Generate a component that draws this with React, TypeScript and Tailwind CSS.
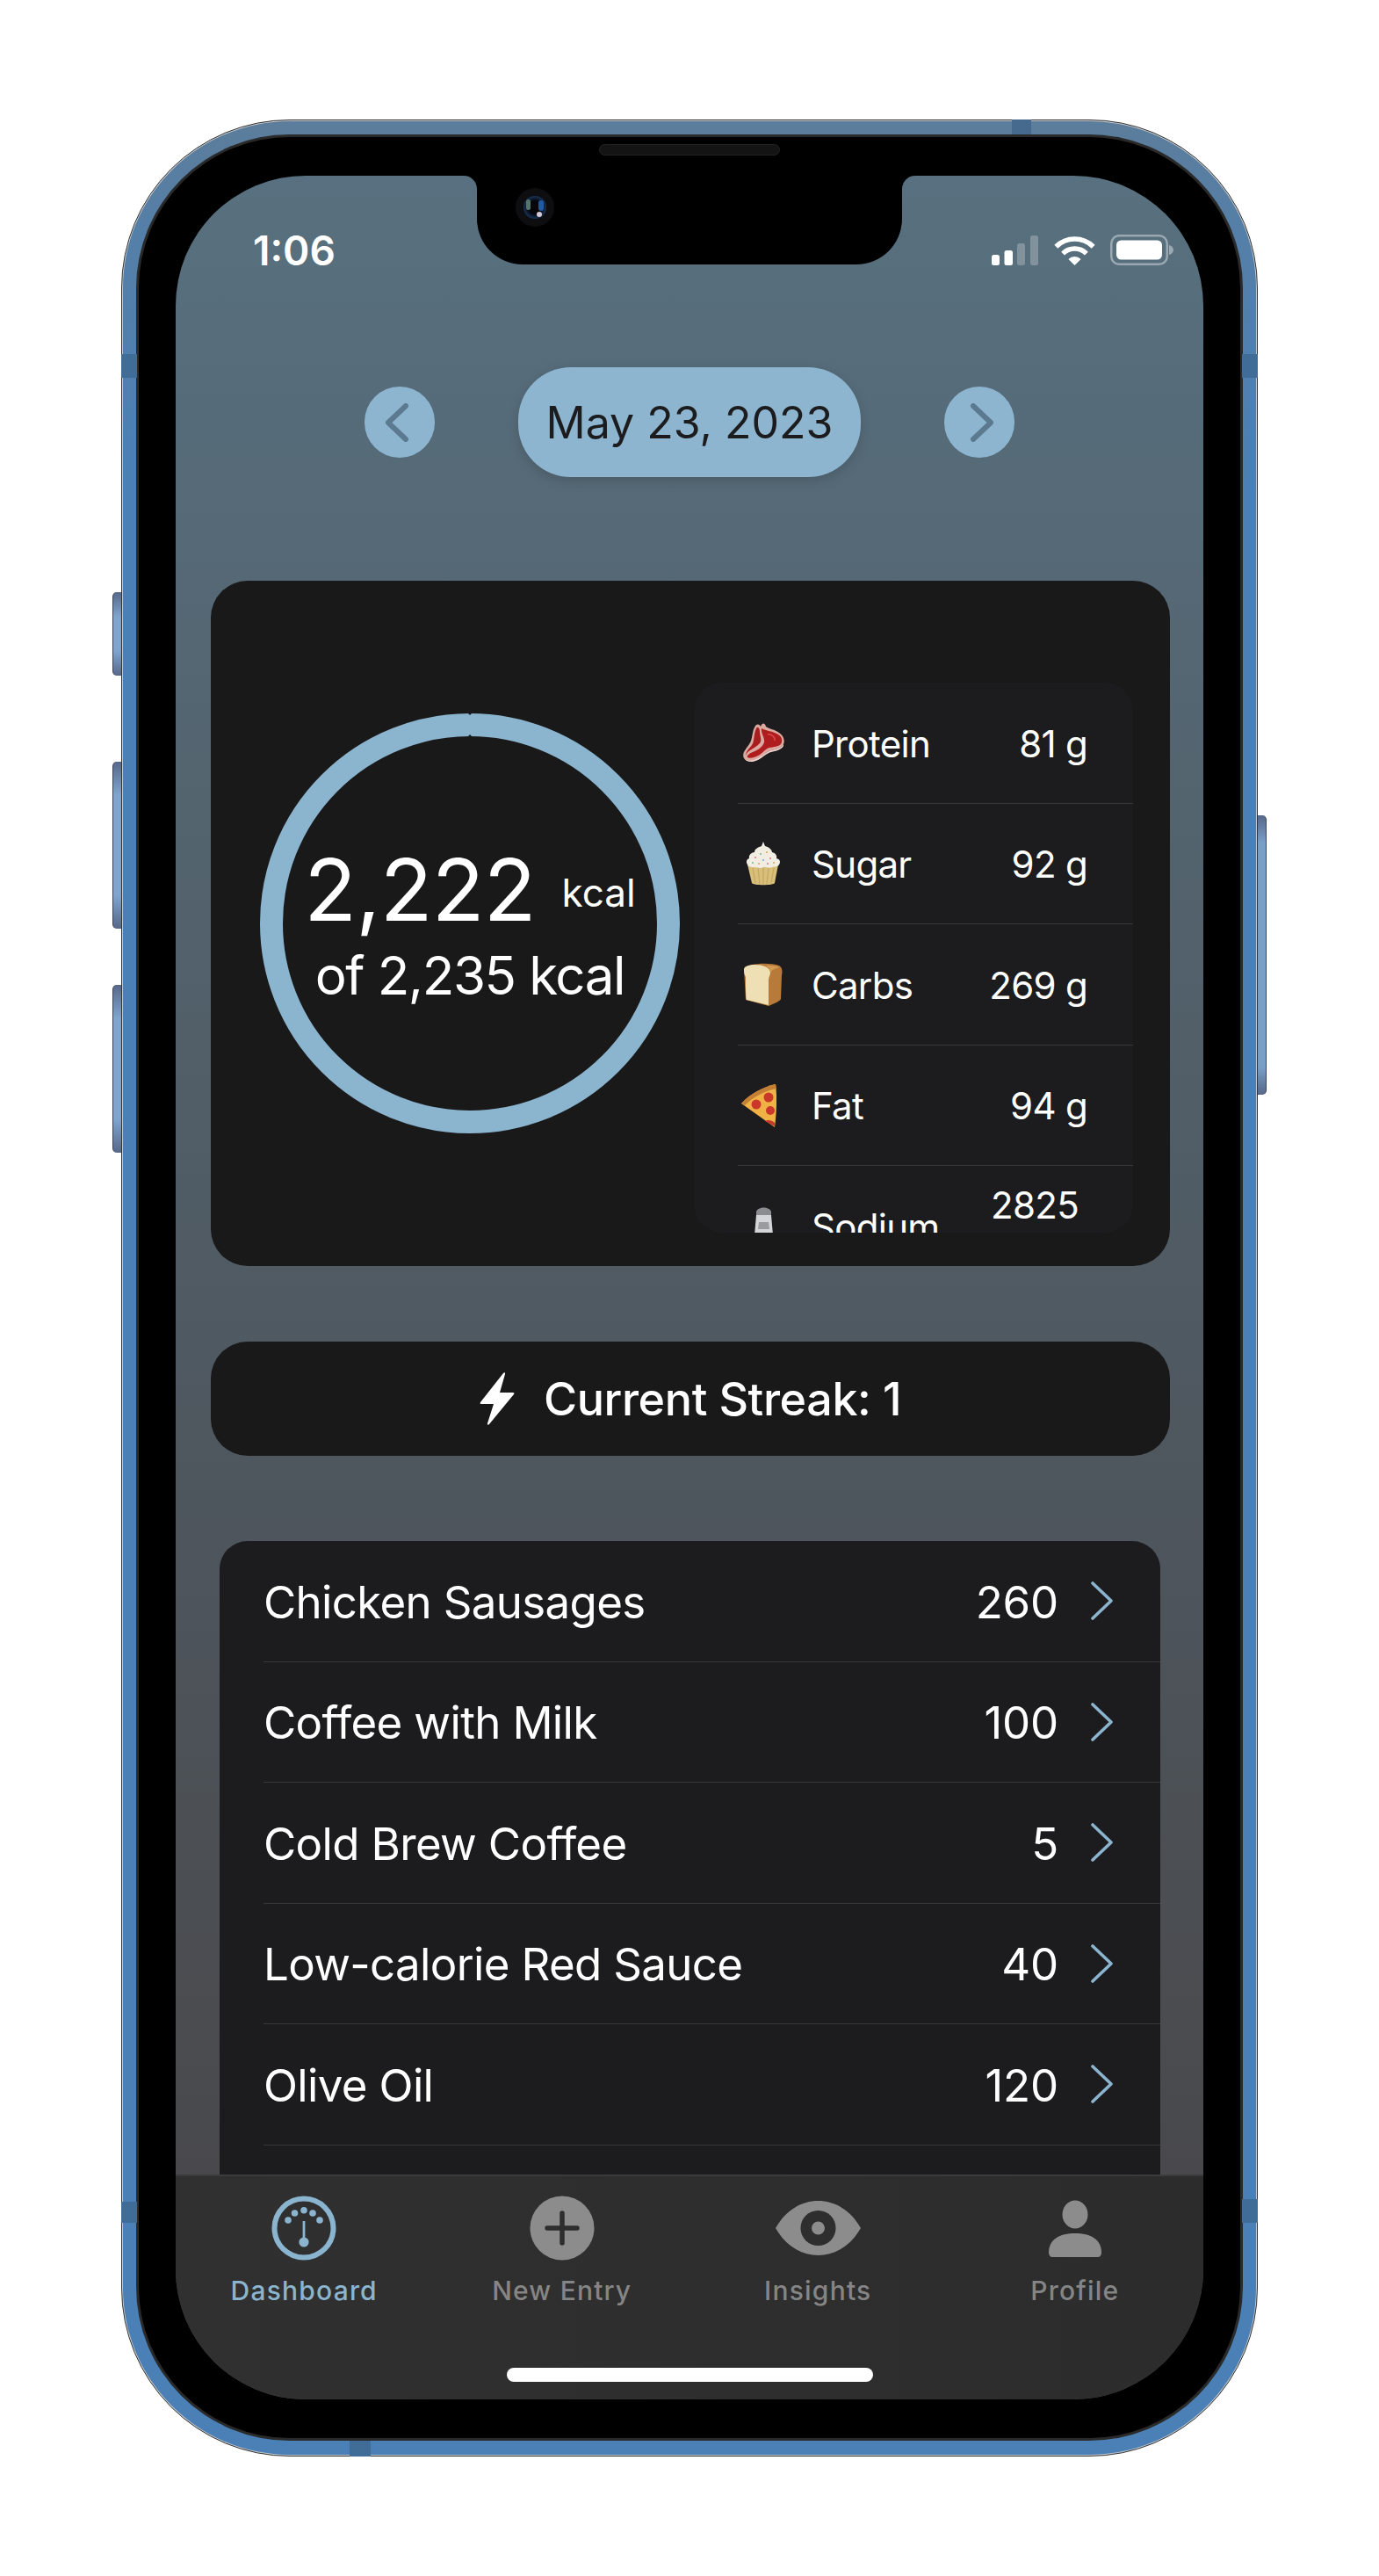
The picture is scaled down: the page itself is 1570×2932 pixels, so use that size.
import React from "react";

const BLUE = "#8bb4ce";

function Steak() {
  return (
    <svg width="48" height="46" viewBox="0 0 48 46">
      <path d="M2 41C-1 35 5 30 8 25C12 20 11 11 14 6C16 1 20 2 21 5C23 0 26 1 27 5C31 8 37 8 42 12C47 15 49 21 47 25C45 29 38 31 33 32C28 33 24 38 18 42C12 45 5 46 2 41Z" fill="#dba99f" />
      <path d="M2 41C5 45 12 44 18 41C24 38 28 33 33 32C38 31 45 29 47 25L47 27C45 31 38 33 33 34C28 35 24 40 18 43C12 46 5 46 2 41Z" fill="#eed2cb" />
      <path d="M4 38C4 33 9 29 11 26C14 22 13 13 16 7C18 4 20 7 20 11C20 16 23 20 20 24C16 28 12 30 9 32C7 33 5 35 4 38Z" fill="#a81e20" />
      <path d="M22 7C27 10 35 10 41 14C46 17 46 22 44 25C41 28 36 28 31 29C27 30 24 34 20 37C15 40 8 42 6 40C5 38 9 35 12 34C17 32 23 29 25 23C26 18 21 12 22 7Z" fill="#b01d1e" />
      <path d="M29 14C33 13 38 17 37 21" stroke="#d8474a" strokeWidth="1.5" fill="none" />
    </svg>
  );
}

function Cupcake() {
  return (
    <svg width="42" height="50" viewBox="0 0 42 50">
      <path d="M3 26L38 26L34 47C33 50 9 50 8 47Z" fill="#d8bf7c" />
      <path d="M3 26C1 23 2 20 5 19C4 15 8 12 11 12C11 8 16 6 19 5L21 0L23 5C27 6 31 9 31 12C35 13 37 16 36 19C40 20 41 23 39 26C38 29 33 28 31 29C27 31 24 28 21 29C18 31 14 29 11 29C8 29 4 29 3 26Z" fill="#f1ede2" />
      <g stroke="#c7a962" strokeWidth="1.4">
        <path d="M9 30L12 47" />
        <path d="M15 30L17 48" />
        <path d="M21 30L21 48" />
        <path d="M27 30L25 48" />
        <path d="M33 30L30 47" />
      </g>
      <g>
        <circle cx="12" cy="18" r="1" fill="#d9748a" />
        <circle cx="18" cy="14" r="1" fill="#79b58a" />
        <circle cx="25" cy="12" r="1" fill="#d9a25f" />
        <circle cx="29" cy="19" r="1" fill="#d9748a" />
        <circle cx="21" cy="21" r="1" fill="#7fa4d0" />
        <circle cx="9" cy="24" r="1" fill="#79b58a" />
        <circle cx="33" cy="24" r="1" fill="#d9a25f" />
        <circle cx="16" cy="25" r="1" fill="#d9a25f" />
        <circle cx="26" cy="25" r="1" fill="#d9748a" />
      </g>
    </svg>
  );
}

function Bread() {
  return (
    <svg className="mr-[2px]" width="45" height="50" viewBox="0 0 45 50">
      <path d="M1 8C5 1 30 0 41 4C45 6 45 12 44 15L43 42C43 44 32 49 29 50L3 43Z" fill="#b87a38" />
      <path d="M1 10C0 5 6 3 13 3C22 3 31 6 31 12C31 15 29 17 29 20L29 49L4 43C3 43 3 20 3 17C2 15 1 13 1 10Z" fill="#efdfb4" />
      <path d="M31 12C31 8 29 5 24 4C30 4 38 4 41 6C39 7 33 8 31 12Z" fill="#d29a52" />
    </svg>
  );
}

function Pizza() {
  return (
    <svg className="mr-[10px]" width="40" height="50" viewBox="0 0 40 50">
      <path d="M0 23C10 12 25 4 39 1C41 15 40 35 38 50Z" fill="#f0b145" />
      <path d="M0 23C10 12 25 4 39 1L40 6C26 9 14 15 4 25Z" fill="#c57f35" />
      <circle cx="31" cy="16" r="5.5" fill="#c9382b" />
      <circle cx="17" cy="24" r="5.5" fill="#c9382b" />
      <circle cx="33" cy="31" r="5" fill="#c9382b" />
      <path d="M27 43C30 41 35 42 38 45L38 49Z" fill="#c9382b" />
    </svg>
  );
}

function Salt() {
  return (
    <svg width="23" height="50" viewBox="0 0 23 50">
      <path d="M3 8C5 2 18 2 20 8L20 12L3 12Z" fill="#8a8c8f" />
      <path d="M3 12L20 12L23 46L0 46Z" fill="#d3d5d8" />
      <path d="M6 20L17 20L18 28L5 28Z" fill="#9a9c9f" />
    </svg>
  );
}

function Chevron({ dir }: { dir: "left" | "right" }) {
  return (
    <svg className={dir === "left" ? "mr-[6px]" : "ml-[5px]"} width="28" height="44" viewBox="0 0 28 44" fill="none" stroke="#5c7a8f" strokeWidth="6" strokeLinecap="round" strokeLinejoin="round">
      <path d={dir === "left" ? "M24 3L4 22L24 41" : "M4 3L24 22L4 41"} />
    </svg>
  );
}

function Signal() {
  return (
    <svg width="54" height="34" viewBox="0 0 54 34" fill="#fff">
      <rect x="0" y="22" width="9" height="12" rx="2.5" />
      <rect x="14.5" y="17" width="9.5" height="17" rx="2.5" />
      <rect x="29" y="9" width="9" height="25" rx="2.5" fillOpacity="0.25" />
      <rect x="44" y="0" width="9" height="34" rx="2.5" fillOpacity="0.25" />
    </svg>
  );
}

function Wifi() {
  return (
    <svg width="47" height="34" viewBox="0 0 47 34" fill="none">
      <path d="M2.3 12.8A30 30 0 0 1 44.7 12.8" stroke="#fff" strokeWidth="5.5" />
      <path d="M10.1 20.6A19 19 0 0 1 36.9 20.6" stroke="#fff" strokeWidth="5.5" />
      <path d="M23.5 34L16.4 26.9A10 10 0 0 1 30.6 26.9Z" fill="#fff" />
    </svg>
  );
}

function Battery() {
  return (
    <svg width="72" height="35" viewBox="0 0 72 35" fill="none">
      <rect x="1.25" y="1.25" width="63.5" height="32.5" rx="9" stroke="#fff" strokeOpacity="0.4" strokeWidth="2.5" />
      <rect x="7" y="6.5" width="52" height="22" rx="5.5" fill="#fff" />
      <path d="M67 12C70 12.5 72 15 72 17.5C72 20 70 22.5 67 23Z" fill="#fff" fillOpacity="0.4" />
    </svg>
  );
}

function DashboardIcon() {
  return (
    <svg width="74" height="74" viewBox="0 0 74 74" fill={BLUE}>
      <circle cx="37" cy="37" r="33.5" fill="none" stroke={BLUE} strokeWidth="6" />
      <circle cx="19" cy="28" r="3.8" />
      <circle cx="26.5" cy="20" r="3.8" />
      <circle cx="37" cy="16.7" r="3.8" />
      <circle cx="47" cy="20" r="3.8" />
      <circle cx="55" cy="28" r="3.8" />
      <rect x="35.6" y="29" width="2.8" height="24" />
      <circle cx="37" cy="53" r="5.6" />
    </svg>
  );
}

function PlusIcon() {
  return (
    <svg width="74" height="74" viewBox="0 0 74 74">
      <circle cx="37" cy="37" r="36.5" fill="#8c8c8c" />
      <path d="M37 20V54M20 37H54" stroke="#2e2e2e" strokeWidth="5.5" strokeLinecap="round" />
    </svg>
  );
}

function EyeIcon() {
  return (
    <svg width="97" height="74" viewBox="0 0 97 74">
      <path d="M0 37C12 16 30 6 48.5 6C67 6 85 16 97 37C85 58 67 68 48.5 68C30 68 12 58 0 37Z" fill="#8c8c8c" />
      <circle cx="48.5" cy="37" r="20" fill="#2e2e2e" />
      <circle cx="48.5" cy="37" r="7.5" fill="#8c8c8c" />
    </svg>
  );
}

function PersonIcon() {
  return (
    <svg width="60" height="74" viewBox="0 0 60 74" fill="#8c8c8c">
      <ellipse cx="30" cy="21.5" rx="14.5" ry="16" />
      <path d="M0 65C0 50 12 43 30 43C48 43 60 50 60 65C60 68 58 70 56 70L4 70C2 70 0 68 0 65Z" />
    </svg>
  );
}

const nutrients = [
  { icon: <Steak />, name: "Protein", value: "81 g" },
  { icon: <Cupcake />, name: "Sugar", value: "92 g" },
  { icon: <Bread />, name: "Carbs", value: "269 g" },
  { icon: <Pizza />, name: "Fat", value: "94 g" },
];

const foods = [
  ["Chicken Sausages", "260"],
  ["Coffee with Milk", "100"],
  ["Cold Brew Coffee", "5"],
  ["Low-calorie Red Sauce", "40"],
  ["Olive Oil", "120"],
];

function Tab({ icon, label, active, inset }: { icon: React.ReactNode; label: string; active?: boolean; inset?: boolean }) {
  return (
    <div className={`flex flex-col items-center ${inset ? "pl-[2px]" : ""}`}>
      <div className="flex h-[74px] items-center justify-center">{icon}</div>
      <div className={`mt-[14px] text-[30px] leading-[40px] font-medium tracking-[1.2px] ${active ? "text-[#8bb4ce]" : "text-[#858585]"}`}>{label}</div>
    </div>
  );
}

export default function App() {
  return (
    <div className="flex h-[2932px] w-full justify-center bg-white pt-[136px] [font-family:Inter,sans-serif]">
      <div className="relative h-[2660px] w-[1294px]">
        {/* side buttons */}
        <div className="absolute left-[-10px] top-[538px] h-[95px] w-[12px] rounded-l-[5px] border-l border-[#3d4250] bg-[linear-gradient(180deg,#56688a,#7fa5cf_30%,#7fa5cf_70%,#56688a)]" />
        <div className="absolute left-[-10px] top-[731px] h-[190px] w-[12px] rounded-l-[5px] border-l border-[#3d4250] bg-[linear-gradient(180deg,#56688a,#7fa5cf_20%,#7fa5cf_80%,#56688a)]" />
        <div className="absolute left-[-10px] top-[985px] h-[191px] w-[12px] rounded-l-[5px] border-l border-[#3d4250] bg-[linear-gradient(180deg,#56688a,#7fa5cf_20%,#7fa5cf_80%,#56688a)]" />
        <div className="absolute right-[-10px] top-[792px] h-[318px] w-[12px] rounded-r-[5px] border-r border-[#3d4250] bg-[linear-gradient(180deg,#56688a,#7a9fc7_10%,#7a9fc7_90%,#56688a)]" />

        {/* device frame */}
        <div className="relative h-full w-full rounded-[192px] border border-[#333333] bg-[#c3c8ce] p-px">
          <div className="h-full w-full rounded-[190px] bg-[linear-gradient(180deg,#5c7d9b_0%,#547fa8_5%,#4a80b6_16%,#4a80b6_100%)] pt-[15px] px-[15px] pb-[16px]">
            <div className="h-full w-full rounded-[175px] bg-[#2a2a2a] p-[3px]">
              <div className="relative h-full w-full rounded-[172px] bg-black px-[42px] pt-[44px] pb-[44px]">
                {/* speaker */}
                <div className="absolute left-[524px] top-[8px] h-[13px] w-[206px] rounded-full border border-[#242424] bg-[#141414]" />
                {/* screen */}
                <div className="relative flex h-full w-full flex-col overflow-hidden rounded-[148px] bg-[linear-gradient(180deg,#58707f_0%,#49494c_90%)]">
                  {/* notch */}
                  <div className="absolute left-[343px] top-0 z-10 h-[101px] w-[484px] rounded-b-[52px] bg-black">
                    <div className="absolute left-[-15px] top-0 h-[15px] w-[15px] bg-black">
                      <div className="h-full w-full rounded-tr-[15px] bg-[#58707f]" />
                    </div>
                    <div className="absolute right-[-15px] top-0 h-[15px] w-[15px] bg-black">
                      <div className="h-full w-full rounded-tl-[15px] bg-[#58707f]" />
                    </div>
                    <div className="absolute left-[44px] top-[14px] flex h-[44px] w-[44px] items-center justify-center rounded-full bg-[#0e0e10]">
                      <div className="relative h-[26px] w-[26px] rounded-full bg-[radial-gradient(circle_at_50%_50%,#05070a_0%,#05070a_40%,#1c3a66_75%,#2f4a42_100%)]">
                        <div className="absolute left-[3px] top-[4px] h-[12px] w-[5px] rounded-full bg-[#56756a]" />
                        <div className="absolute right-[3px] top-[5px] h-[12px] w-[6px] rounded-full bg-[#1f5aa6]" />
                        <div className="absolute bottom-[2px] right-[5px] h-[6px] w-[6px] rounded-full bg-[#d8c8d8]" />
                      </div>
                    </div>
                  </div>

                  {/* status bar */}
                  <div className="flex h-[169px] shrink-0 items-center justify-between pl-[88px] pr-[34px]">
                    <div className="text-[46px] font-semibold leading-none text-white">1:06</div>
                    <div className="flex items-center gap-[17px]">
                      <Signal />
                      <Wifi />
                      <Battery />
                    </div>
                  </div>

                  {/* scrolling content */}
                  <div className="min-h-0 flex-1 overflow-hidden">
                    <div className="mt-[49px] flex h-[125px] items-center justify-center">
                      <div className="flex h-[81px] w-[80px] items-center justify-center rounded-full bg-[#8db5d0]">
                        <Chevron dir="left" />
                      </div>
                      <div className="mx-[95px] flex h-[125px] w-[390px] items-center justify-center rounded-[60px] bg-[#8db5d0] pt-[2px] text-[50px] text-[#1c1c1e] shadow-[0_4px_14px_rgba(0,0,0,0.15)]">
                        May 23, 2023
                      </div>
                      <div className="flex h-[81px] w-[80px] items-center justify-center rounded-full bg-[#8db5d0]">
                        <Chevron dir="right" />
                      </div>
                    </div>

                    {/* summary card */}
                    <div className="ml-[40px] mr-[38px] mt-[118px] flex h-[780px] rounded-[42px] bg-[#19191a] pl-[56px]">
                      <div className="relative mt-[151px] flex h-[478px] w-[478px] shrink-0 flex-col items-center justify-center text-white">
                        <svg className="absolute inset-0" width="478" height="478" viewBox="0 0 478 478">
                          <circle cx="239" cy="239" r="226" fill="none" stroke={BLUE} strokeWidth="26" />
                          <path d="M237 0L241 0L239 2Z M237 26L241 26L239 24Z" fill="#19191a" />
                        </svg>
                        <div className="flex items-center">
                          <span className="text-[98px] font-normal leading-[112px] tracking-[-0.8px]">2,222</span>
                          <span className="ml-[30px] mt-[6px] text-[44px] leading-none">kcal</span>
                        </div>
                        <div className="mt-[6px] text-[60px] leading-[70px] tracking-[-1.4px]">of 2,235 kcal</div>
                      </div>
                      <div className="ml-[16px] mt-[116px] h-[626px] w-[500px] overflow-hidden rounded-[32px] bg-[#1c1c1e] text-[42px] tracking-[-0.7px] text-white">
                        {nutrients.map((n) => (
                          <div key={n.name} className="ml-[50px] flex h-[137.5px] items-center border-b border-[#38383a] pr-[52px]">
                            <div className="flex h-[50px] w-[58px] items-center justify-center">{n.icon}</div>
                            <div className="ml-[26px] flex-1 pt-[2px]">{n.name}</div>
                            <div className="pt-[2px] text-right">{n.value}</div>
                          </div>
                        ))}
                        <div className="ml-[50px] flex h-[137.5px] items-center pr-[62px]">
                          <div className="flex h-[50px] w-[58px] items-center justify-center"><Salt /></div>
                          <div className="ml-[26px] flex-1 pt-[2px]">Sodium</div>
                          <div className="pt-[2px] text-right leading-[50px]">2825<br />mg</div>
                        </div>
                      </div>
                    </div>

                    {/* streak */}
                    <div className="ml-[40px] mr-[38px] mt-[86px] flex h-[130px] items-center justify-center rounded-[42px] bg-[#19191a] text-white">
                      <svg width="40" height="60" viewBox="0 0 40 60" fill="#fff">
                        <path d="M27 1L1 34C0 35.500 1 36 2 36L16 36L9 58C8.500 60 10 60 11 59L39 25C40 24 39.500 23 38 23L23 23L29 2C29.500 0 28 0 27 1Z" />
                      </svg>
                      <div className="ml-[33px] pt-[2px] text-[52px] font-medium leading-none tracking-[-0.4px]">Current Streak: 1</div>
                    </div>

                    {/* food list */}
                    <div className="ml-[50px] mr-[49px] mt-[97px] overflow-hidden rounded-[32px] bg-[#1c1c1e] text-[51px] text-white">
                      {foods.map(([name, kcal]) => (
                        <div key={name} className="ml-[50px] flex h-[137.5px] items-center border-b border-[#38383a] pr-[53px]">
                          <div className="flex-1 pt-[3px] tracking-[-0.65px]">{name}</div>
                          <div className="pt-[3px] tracking-[-0.2px]">{kcal}</div>
                          <svg className="ml-[36px]" width="27" height="44" viewBox="0 0 27 44" fill="none" stroke={BLUE} strokeWidth="3.6" strokeLinecap="round" strokeLinejoin="round">
                            <path d="M3 2L24 22L3 42" />
                          </svg>
                        </div>
                      ))}
                      <div className="h-[137.5px]" />
                    </div>
                  </div>

                  {/* tab bar */}
                  <div className="relative grid h-[256px] shrink-0 grid-cols-4 border-t-2 border-[#3b3b3d] bg-[linear-gradient(90deg,#303030,#2c2c2c)] pt-[22px]">
                    <Tab icon={<DashboardIcon />} label="Dashboard" active />
                    <Tab icon={<PlusIcon />} label="New Entry" inset />
                    <Tab icon={<EyeIcon />} label="Insights" />
                    <Tab icon={<PersonIcon />} label="Profile" />
                    <div className="absolute bottom-[20px] left-[377px] h-[16px] w-[417px] rounded-full bg-white" />
                  </div>
                </div>
              </div>
            </div>
          </div>
        </div>

        {/* antenna bands */}
        <div className="absolute left-[1014px] top-0 h-[17px] w-[22px] bg-[#456a8d]" />
        <div className="absolute left-0 top-[267px] h-[27px] w-[18px] bg-[#3f6d98]" />
        <div className="absolute right-0 top-[267px] h-[27px] w-[18px] bg-[#3f6d98]" />
        <div className="absolute left-0 top-[2370px] h-[24px] w-[18px] bg-[#3f6d98]" />
        <div className="absolute right-0 top-[2367px] h-[27px] w-[18px] bg-[#3f6d98]" />
        <div className="absolute bottom-0 left-[260px] h-[18px] w-[24px] bg-[#3f6d98]" />
      </div>
    </div>
  );
}
